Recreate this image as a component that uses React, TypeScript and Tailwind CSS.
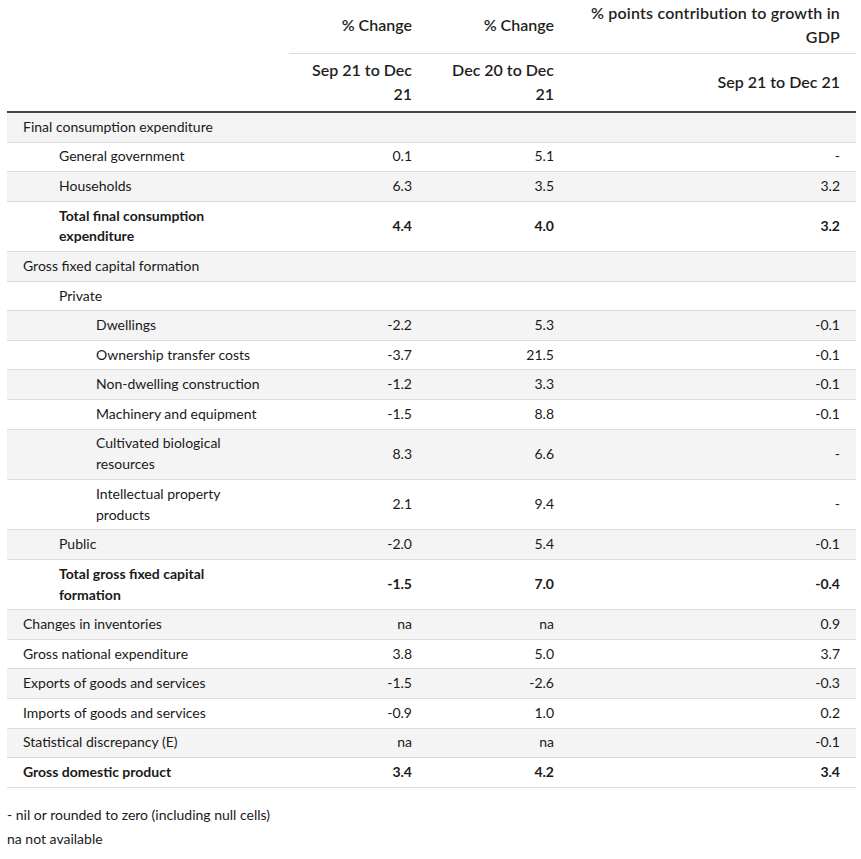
import React from "react";

type Row = {
  label: React.ReactNode;
  level: 0 | 1 | 2;
  bold?: boolean;
  v?: [string, string, string];
};

const rows: Row[] = [
  { label: "Final consumption expenditure", level: 0 },
  { label: "General government", level: 1, v: ["0.1", "5.1", "-"] },
  { label: "Households", level: 1, v: ["6.3", "3.5", "3.2"] },
  {
    label: (
      <>
        Total final consumption
        <br />
        expenditure
      </>
    ),
    level: 1,
    bold: true,
    v: ["4.4", "4.0", "3.2"],
  },
  { label: "Gross fixed capital formation", level: 0 },
  { label: "Private", level: 1 },
  { label: "Dwellings", level: 2, v: ["-2.2", "5.3", "-0.1"] },
  { label: "Ownership transfer costs", level: 2, v: ["-3.7", "21.5", "-0.1"] },
  { label: "Non-dwelling construction", level: 2, v: ["-1.2", "3.3", "-0.1"] },
  { label: "Machinery and equipment", level: 2, v: ["-1.5", "8.8", "-0.1"] },
  {
    label: (
      <>
        Cultivated biological
        <br />
        resources
      </>
    ),
    level: 2,
    v: ["8.3", "6.6", "-"],
  },
  {
    label: (
      <>
        Intellectual property
        <br />
        products
      </>
    ),
    level: 2,
    v: ["2.1", "9.4", "-"],
  },
  { label: "Public", level: 1, v: ["-2.0", "5.4", "-0.1"] },
  {
    label: (
      <>
        Total gross fixed capital
        <br />
        formation
      </>
    ),
    level: 1,
    bold: true,
    v: ["-1.5", "7.0", "-0.4"],
  },
  { label: "Changes in inventories", level: 0, v: ["na", "na", "0.9"] },
  { label: "Gross national expenditure", level: 0, v: ["3.8", "5.0", "3.7"] },
  { label: "Exports of goods and services", level: 0, v: ["-1.5", "-2.6", "-0.3"] },
  { label: "Imports of goods and services", level: 0, v: ["-0.9", "1.0", "0.2"] },
  { label: "Statistical discrepancy (E)", level: 0, v: ["na", "na", "-0.1"] },
  { label: "Gross domestic product", level: 0, bold: true, v: ["3.4", "4.2", "3.4"] },
];

const indent = ["pl-[16px]", "pl-[52px]", "pl-[89px]"];

export default function App() {
  return (
    <div className="min-h-screen bg-white text-[#1a1a1a] font-['Lato','Open_Sans',sans-serif]">
      <table className="ml-[7px] w-[849px] table-fixed border-collapse text-[14px]">
        <colgroup>
          <col className="w-[282px]" />
          <col className="w-[139px]" />
          <col className="w-[142px]" />
          <col className="w-[286px]" />
        </colgroup>
        <thead className="text-[16px] font-semibold leading-[24px] text-[#1f1f1f]">
          <tr>
            <th rowSpan={2} className="border-b-2 border-[#444]"></th>
            <th className="border-b border-[#dcdcdc] pr-[16px] pt-[1px] pb-[4px] text-right align-middle font-semibold">
              % Change
            </th>
            <th className="border-b border-[#dcdcdc] pr-[16px] pt-[1px] pb-[4px] text-right align-middle font-semibold">
              % Change
            </th>
            <th className="border-b border-[#dcdcdc] pr-[16px] pt-[1px] pb-[4px] text-right align-middle font-semibold tracking-[0.2px]">
              % points contribution to growth in
              <br />
              GDP
            </th>
          </tr>
          <tr>
            <th className="border-b-2 border-[#444] pr-[16px] pt-[4px] pb-[5px] text-right align-middle font-semibold">
              Sep 21 to Dec
              <br />
              21
            </th>
            <th className="border-b-2 border-[#444] pr-[16px] pt-[4px] pb-[5px] text-right align-middle font-semibold">
              Dec 20 to Dec
              <br />
              21
            </th>
            <th className="border-b-2 border-[#444] pr-[16px] pt-[4px] pb-[5px] text-right align-middle font-semibold">
              Sep 21 to Dec 21
            </th>
          </tr>
        </thead>
        <tbody className="leading-[20.8px]">
          {rows.map((r, i) => (
            <tr
              key={i}
              className={`border-b border-[#dcdcdc] ${i % 2 === 0 ? "bg-[#f4f4f4]" : "bg-white"} ${
                r.bold ? "font-bold" : ""
              }`}
            >
              <td className={`${indent[r.level]} whitespace-nowrap py-[3.9px] pr-[16px] text-left align-middle`}>
                {r.label}
              </td>
              {[0, 1, 2].map((k) => (
                <td key={k} className="py-[3.9px] pr-[16px] text-right align-middle">
                  {r.v ? r.v[k] : ""}
                </td>
              ))}
            </tr>
          ))}
        </tbody>
      </table>
      <div className="ml-[7px] mt-[15px] text-[14px] leading-[24px]">
        <p>- nil or rounded to zero (including null cells)</p>
        <p>na not available</p>
      </div>
    </div>
  );
}
